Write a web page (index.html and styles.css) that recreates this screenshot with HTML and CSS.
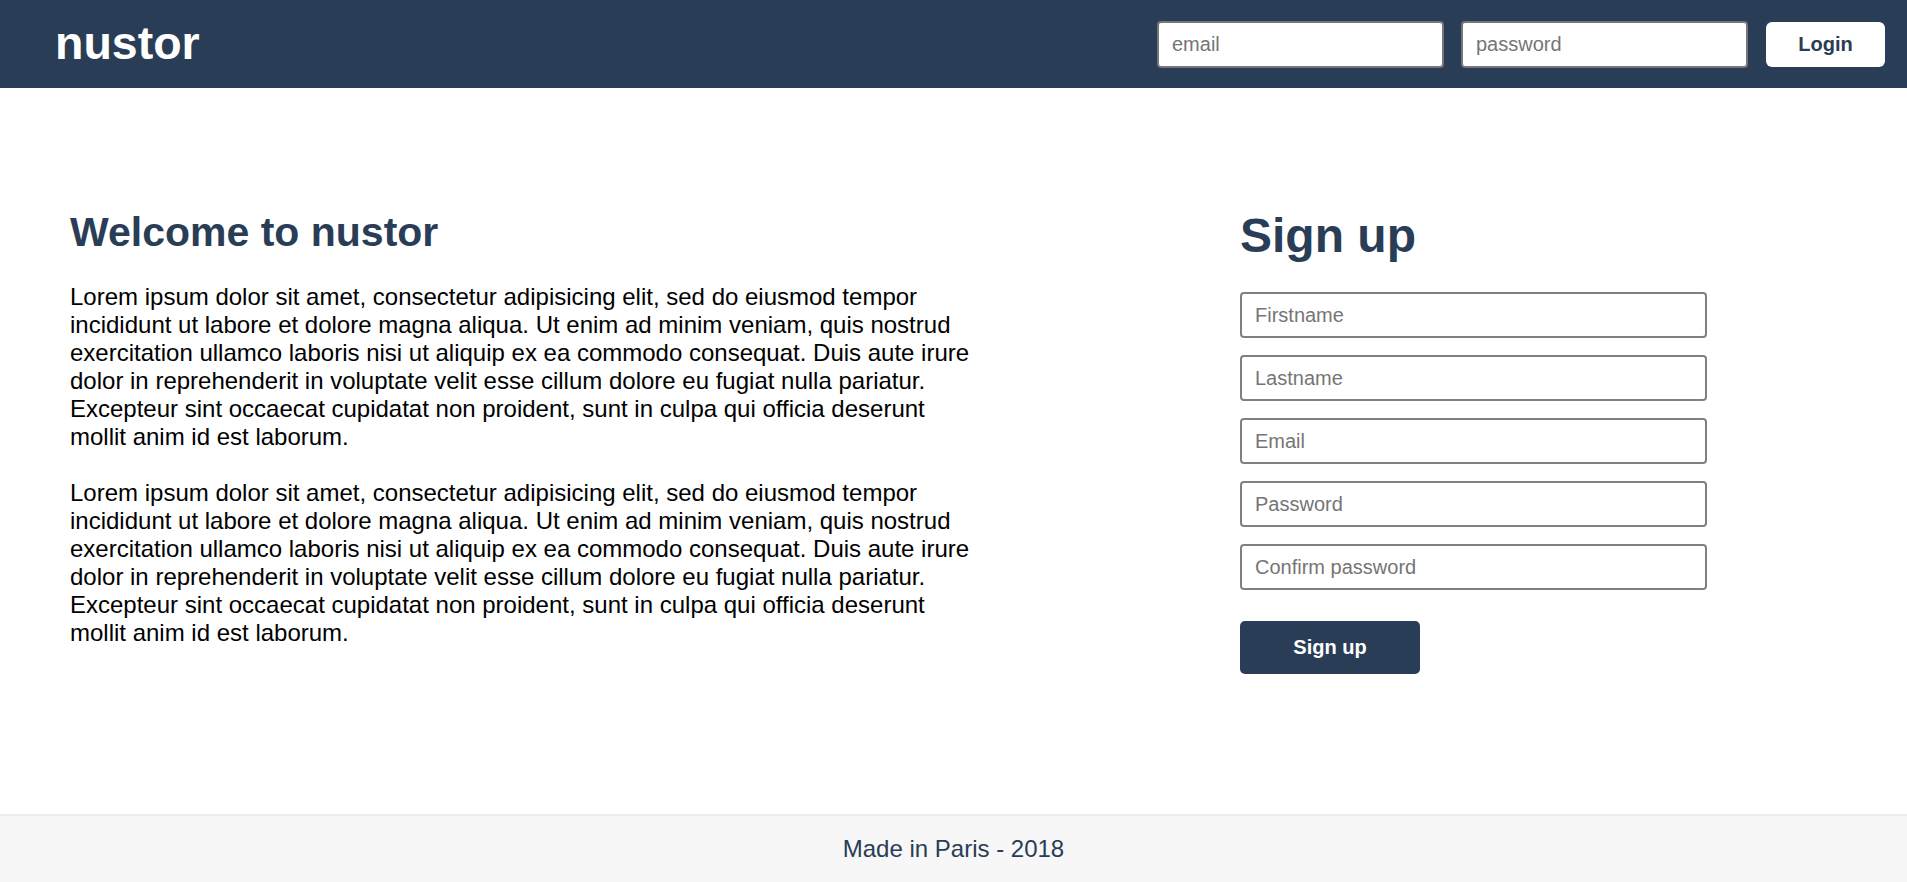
FILE: index.html
```html
<!DOCTYPE html>
<html lang="en">
<head>
<meta charset="utf-8">
<title>nustor</title>
<link rel="stylesheet" href="styles.css">
</head>
<body>
<header class="topbar">
  <div class="logo">nustor</div>
  <form class="login">
    <input class="login-input" type="text" placeholder="email">
    <input class="login-input" type="password" placeholder="password">
    <button class="login-btn" type="button">Login</button>
  </form>
</header>
<main class="content">
  <section class="intro">
    <h2 class="intro-title">Welcome to nustor</h2>
    <p class="intro-text">Lorem ipsum dolor sit amet, consectetur adipisicing elit, sed do eiusmod tempor incididunt ut labore et dolore magna aliqua. Ut enim ad minim veniam, quis nostrud exercitation ullamco laboris nisi ut aliquip ex ea commodo consequat. Duis aute irure dolor in reprehenderit in voluptate velit esse cillum dolore eu fugiat nulla pariatur. Excepteur sint occaecat cupidatat non proident, sunt in culpa qui officia deserunt mollit anim id est laborum.</p>
    <p class="intro-text">Lorem ipsum dolor sit amet, consectetur adipisicing elit, sed do eiusmod tempor incididunt ut labore et dolore magna aliqua. Ut enim ad minim veniam, quis nostrud exercitation ullamco laboris nisi ut aliquip ex ea commodo consequat. Duis aute irure dolor in reprehenderit in voluptate velit esse cillum dolore eu fugiat nulla pariatur. Excepteur sint occaecat cupidatat non proident, sunt in culpa qui officia deserunt mollit anim id est laborum.</p>
  </section>
  <section class="signup">
    <h1 class="signup-title">Sign up</h1>
    <form class="signup-form">
      <input class="field" type="text" placeholder="Firstname">
      <input class="field" type="text" placeholder="Lastname">
      <input class="field" type="email" placeholder="Email">
      <input class="field" type="password" placeholder="Password">
      <input class="field" type="password" placeholder="Confirm password">
      <button class="signup-btn" type="button">Sign up</button>
    </form>
  </section>
</main>
<footer class="footer">Made in Paris - 2018</footer>
</body>
</html>
```
FILE: styles.css
```css
* {
  box-sizing: border-box;
}

html, body {
  margin: 0;
  padding: 0;
}

body {
  font-family: "Liberation Sans", Arial, sans-serif;
  color: #000;
  background: #fff;
  display: flex;
  flex-direction: column;
  min-height: 100vh;
}

.topbar {
  height: 88px;
  flex: 0 0 88px;
  background: #293d56;
  display: flex;
  align-items: center;
  justify-content: space-between;
  padding: 0 22px 0 55px;
}

.logo {
  color: #fff;
  font-size: 46.5px;
  font-weight: bold;
  line-height: 54px;
  margin-top: -2px;
}

.login {
  display: flex;
  align-items: center;
  gap: 17px;
  margin: 0;
}

.login-input {
  width: 287px;
  height: 47px;
  border: 2px solid #767676;
  border-radius: 4px;
  padding: 0 13px;
  font-family: inherit;
  font-size: 20px;
  color: #000;
  background: #fff;
}

.login-input::placeholder,
.field::placeholder {
  color: #757575;
}

.login-btn {
  width: 119px;
  height: 45px;
  margin-left: 1px;
  border: none;
  border-radius: 6px;
  background: #fff;
  color: #293d56;
  font-family: inherit;
  font-size: 20px;
  font-weight: bold;
  cursor: pointer;
}

.content {
  flex: 1 0 auto;
  display: flex;
  align-items: flex-start;
  padding: 121px 0 0 70px;
}

.intro {
  width: 908px;
  flex: 0 0 908px;
}

.intro-title {
  margin: 0 0 28px;
  font-size: 41px;
  line-height: 46px;
  font-weight: bold;
  color: #293d56;
}

.intro-text {
  margin: 0 0 28px;
  font-size: 24px;
  line-height: 28px;
}

.signup {
  width: 467px;
  flex: 0 0 467px;
  margin-left: 262px;
}

.signup-title {
  margin: 0 0 29px;
  font-size: 48px;
  line-height: 54px;
  font-weight: bold;
  color: #293d56;
}

.signup-form {
  display: flex;
  flex-direction: column;
  align-items: flex-start;
  margin: 0;
}

.field {
  width: 100%;
  height: 46px;
  margin: 0 0 17px;
  border: 2px solid #808080;
  border-radius: 4px;
  padding: 0 13px;
  font-family: inherit;
  font-size: 20px;
  color: #000;
  background: #fff;
}

.signup-btn {
  width: 180px;
  height: 53px;
  margin-top: 14px;
  border: none;
  border-radius: 5px;
  background: #293d56;
  color: #fff;
  font-family: inherit;
  font-size: 20px;
  font-weight: bold;
  cursor: pointer;
}

.footer {
  flex: 0 0 68px;
  height: 68px;
  background: #f7f7f7;
  border-top: 2px solid #ececec;
  display: flex;
  align-items: center;
  justify-content: center;
  font-size: 24px;
  color: #293d56;
}
```
